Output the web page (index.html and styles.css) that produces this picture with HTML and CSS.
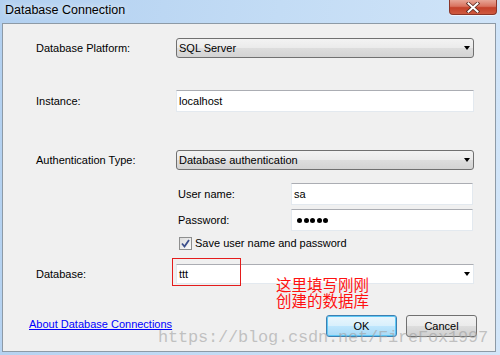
FILE: index.html
```html
<!DOCTYPE html>
<html>
<head>
<meta charset="utf-8">
<link rel="stylesheet" href="styles.css">
</head>
<body>
<div class="window">
  <div class="titlebar">
    <span class="title">Database Connection</span>
    <div class="close">
      <svg width="14" height="11" viewBox="0 0 14 11">
        <path d="M2.5 1.5 L11.5 9.5 M11.5 1.5 L2.5 9.5" stroke="#5a2a22" stroke-width="3.6" stroke-linecap="square" fill="none"/>
        <path d="M2.5 1.5 L11.5 9.5 M11.5 1.5 L2.5 9.5" stroke="#ffffff" stroke-width="2" stroke-linecap="square" fill="none"/>
      </svg>
    </div>
  </div>
  <div class="panel">
    <div class="row">
      <span class="lbl">Database Platform:</span>
      <div class="select">SQL Server<span class="arrow"></span></div>
    </div>
    <div class="row r-instance">
      <span class="lbl">Instance:</span>
      <div class="input">localhost</div>
    </div>
    <div class="row r-auth">
      <span class="lbl">Authentication Type:</span>
      <div class="select">Database authentication<span class="arrow"></span></div>
    </div>
    <div class="sub">
      <div class="subrow">
        <span class="sublbl">User name:</span>
        <div class="input">sa</div>
      </div>
      <div class="subrow r-pass">
        <span class="sublbl">Password:</span>
        <div class="input dots"><i></i><i></i><i></i><i></i><i></i></div>
      </div>
      <div class="check">
        <span class="box">
          <svg width="9" height="9" viewBox="0 0 9 9"><path d="M1 4.5 L3.5 7.5 L8 1" stroke="#3c4f8c" stroke-width="1.8" fill="none"/></svg>
        </span>
        <span>Save user name and password</span>
      </div>
    </div>
    <div class="row r-db">
      <span class="lbl">Database:</span>
      <div class="combo">ttt<span class="arrow"></span>
        <span class="redbox"></span>
        <span class="note">这里填写刚刚<br>创建的数据库</span>
      </div>
    </div>
    <div class="footer">
      <a class="link" href="#">About Database Connections</a>
      <div class="buttons">
        <span class="btn ok">OK</span>
        <span class="btn">Cancel</span>
      </div>
    </div>
    <div class="watermark">https://blog.csdn.net/FireFox1997</div>
  </div>
</div>
</body>
</html>
```
FILE: styles.css
```css
html, body {
  margin: 0;
  padding: 0;
}
body {
  width: 500px;
  height: 355px;
  overflow: hidden;
  font-family: "Liberation Sans", Arial, sans-serif;
  font-size: 11px;
  color: #000;
}
.window {
  width: 500px;
  height: 355px;
  display: flex;
  flex-direction: column;
  background: linear-gradient(100deg, #b2d0f0 0%, #c3dcf5 50%, #d3e6f9 100%);
}
.titlebar {
  height: 23px;
  flex: none;
  display: flex;
  align-items: flex-start;
}
.title {
  padding: 2px 0 0 5px;
  font-size: 12.5px;
  line-height: 16px;
  text-shadow: 0 0 6px rgba(255,255,255,0.9);
}
.close {
  margin-left: auto;
  margin-right: 3px;
  width: 48px;
  height: 15px;
  box-sizing: border-box;
  border: 1px solid #8b3528;
  border-top: none;
  border-radius: 0 0 4px 4px;
  background: linear-gradient(#e7a596 0%, #d9735f 45%, #c4412a 55%, #cf5a40 100%);
  display: flex;
  align-items: center;
  justify-content: center;
  box-shadow: 0 1px 0 rgba(255,255,255,0.6);
}
.panel {
  flex: 1;
  margin: 0 4px 3px 2px;
  border: 1px solid #8d9aa6;
  background: #f0f0f0;
  position: relative;
  padding: 14px 0 0 0;
  display: flex;
  flex-direction: column;
}
.row {
  display: flex;
  align-items: center;
  padding-right: 21px;
}
.lbl {
  flex: none;
  width: 173px;
  padding-left: 33px;
  box-sizing: border-box;
}
.select, .input, .combo {
  flex: 1;
  position: relative;
  box-sizing: border-box;
  padding-left: 2px;
  display: flex;
  align-items: center;
}
.select {
  height: 20px;
  border: 1px solid #707070;
  border-radius: 3px;
  background: linear-gradient(#f3f3f3 0%, #ebebeb 48%, #dddddd 52%, #d3d3d3 100%);
}
.input {
  height: 22px;
  border: 1px solid #e3e9ef;
  border-top-color: #abadb3;
  background: #fff;
}
.combo {
  height: 20px;
  border: 1px solid #e3e9ef;
  border-top-color: #abadb3;
  background: #fff;
}
.arrow {
  position: absolute;
  right: 3px;
  top: 7px;
  width: 0;
  height: 0;
  border-left: 3.5px solid transparent;
  border-right: 3.5px solid transparent;
  border-top: 4px solid #000;
}
.r-instance { margin-top: 32px; }
.r-auth { margin-top: 38px; }
.sub {
  margin: 13px 22px 0 175px;
  display: flex;
  flex-direction: column;
}
.subrow {
  display: flex;
  align-items: center;
}
.r-pass { margin-top: 4px; }
.sublbl {
  flex: none;
  width: 113px;
}
.dots {
  gap: 1.6px;
  padding-left: 5px;
}
.dots i {
  width: 5px;
  height: 5px;
  border-radius: 50%;
  background: #000;
}
.check {
  margin-top: 5px;
  height: 14px;
  display: flex;
  align-items: center;
  gap: 3px;
  margin-left: 1px;
}
.box {
  width: 13px;
  height: 13px;
  box-sizing: border-box;
  border: 1px solid #8e8f8f;
  background: linear-gradient(135deg, #dcdcdc, #fbfbfb);
  display: flex;
  align-items: center;
  justify-content: center;
}
.r-db { margin-top: 14px; }
.redbox {
  position: absolute;
  left: -5px;
  top: -7px;
  width: 69px;
  height: 28px;
  box-sizing: border-box;
  border: 1px solid #e41c1c;
}
.note {
  position: absolute;
  left: 99px;
  top: 11px;
  color: #ff1010;
  font-family: "Noto Sans CJK SC", sans-serif;
  font-size: 15.5px;
  line-height: 16px;
  white-space: nowrap;
}
.footer {
  margin-top: 31px;
  display: flex;
  align-items: center;
  padding: 0 18px 0 26px;
}
.link {
  color: #0000ff;
  text-decoration: underline;
  margin-top: -5px;
}
.buttons {
  margin-left: auto;
  display: flex;
  gap: 9px;
}
.btn {
  width: 71px;
  height: 22px;
  box-sizing: border-box;
  border: 1px solid #707070;
  border-radius: 3px;
  background: linear-gradient(#f2f2f2 0%, #ebebeb 48%, #dddddd 52%, #cfcfcf 100%);
  display: flex;
  align-items: center;
  justify-content: center;
}
.ok {
  border-color: #3c7fb1;
  background: linear-gradient(#eaf6fd 0%, #d9f0fc 48%, #bee6fd 52%, #a7d9f5 100%);
  box-shadow: inset 0 0 0 1px #5fc8f5;
}
.watermark {
  position: absolute;
  left: 155px;
  top: 304px;
  font-family: "Liberation Mono", monospace;
  font-size: 17px;
  line-height: 20px;
  letter-spacing: -0.2px;
  color: rgba(160,160,160,0.6);
  white-space: nowrap;
  pointer-events: none;
}
```
